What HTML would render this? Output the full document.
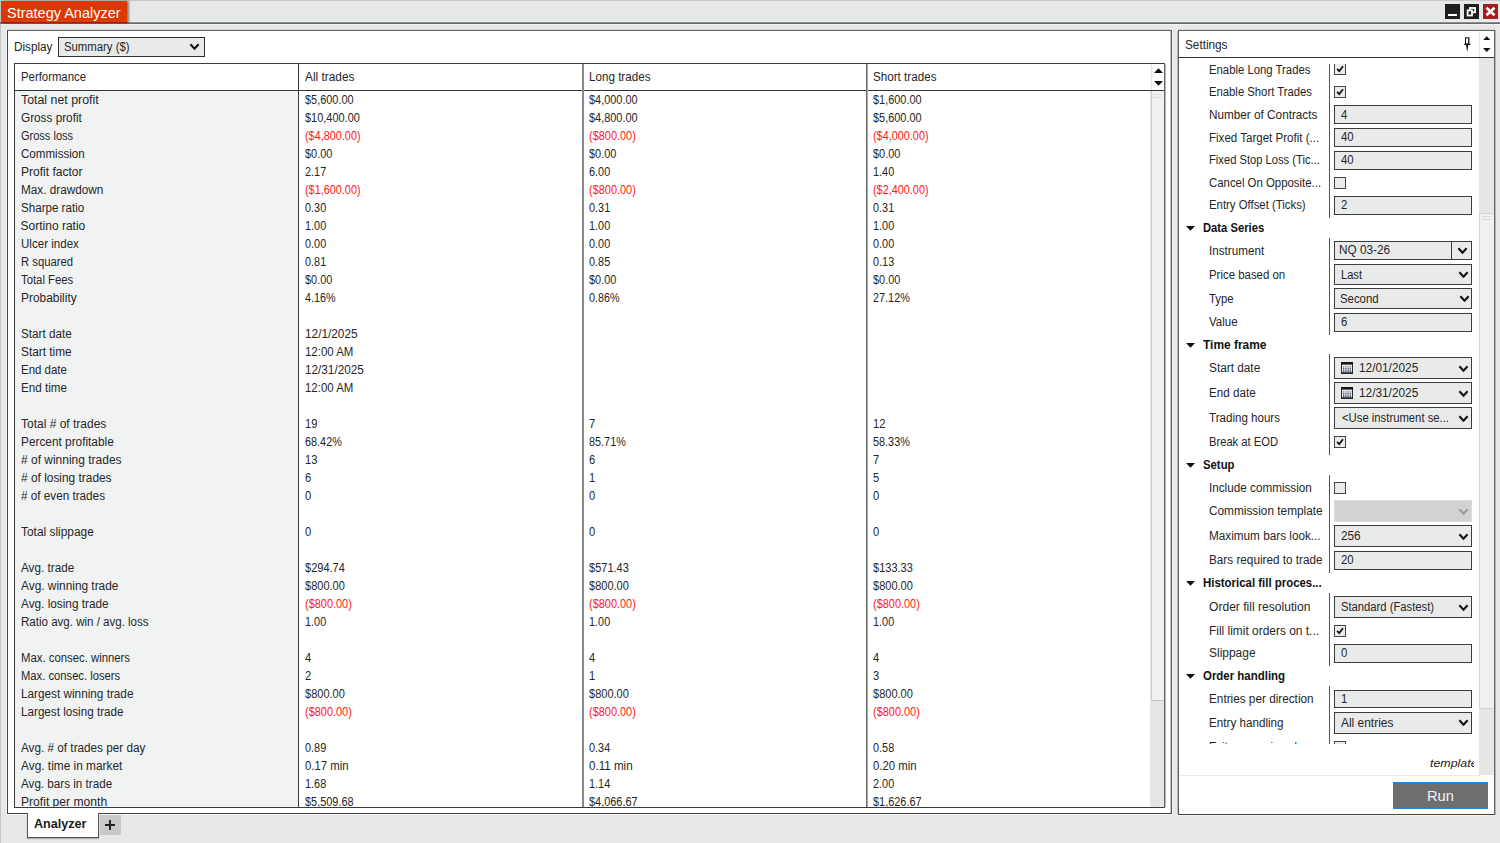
<!DOCTYPE html>
<html><head><meta charset="utf-8"><title>Strategy Analyzer</title>
<style>
html,body{margin:0;padding:0;}
body{width:1500px;height:843px;overflow:hidden;background:#e7e8ea;font-family:"Liberation Sans",sans-serif;}
#w{position:relative;width:1500px;height:843px;overflow:hidden;background:#e7e8ea;}
#w div,#w span,#w svg{position:absolute;box-sizing:border-box;}
.t{white-space:pre;line-height:1;transform-origin:0 0;}
.in{background:#e9eaea;border:1px solid #3c3c3c;}
.cb{background:#eaebeb;border:1px solid #444;width:12px;height:12px;}
.vs{background:#555;width:1px;}
</style></head><body><div id="w">
<div style="left:0;top:0;width:1500px;height:1px;background:#c9c9c9"></div>
<div style="left:0;top:0;width:1px;height:843px;background:#c4c4c4"></div>
<div style="left:1px;top:21px;width:1499px;height:1px;background:#eff0f1"></div>
<div style="left:0;top:22px;width:1500px;height:1px;background:#8a8c8c"></div>
<div style="left:0;top:23px;width:1500px;height:1px;background:#666a69"></div>
<div style="left:1px;top:24px;width:1499px;height:1px;background:#f4f4f5"></div>
<div style="left:1px;top:1px;width:126px;height:22px;background:linear-gradient(#dd3700 0,#dd3700 19px,#e63b00 19.5px,#e63b00 20.5px,#9e2200 21px);box-shadow:2px 0 2px rgba(0,0,0,.45)"></div>
<div style="left:1445px;top:4px;width:15px;height:15px;background:#1f1f1f"></div>
<div style="left:1448px;top:14px;width:9px;height:2px;background:#fff"></div>
<div style="left:1464px;top:4px;width:15px;height:15px;background:#1f1f1f"></div>
<svg style="left:1464px;top:4px" width="15" height="15" viewBox="0 0 15 15"><rect x="5.9" y="4" width="5.2" height="4.3" fill="none" stroke="#fff" stroke-width="1.8"/><rect x="3.6" y="6.4" width="4.4" height="5.1" fill="#1f1f1f" stroke="#fff" stroke-width="1.8"/></svg>
<div style="left:1483px;top:4px;width:15px;height:15px;background:#a51c1c"></div>
<svg style="left:1483px;top:4px" width="15" height="15" viewBox="0 0 15 15"><path d="M3.5 3.8 L11.5 11.2 M11.5 3.8 L3.5 11.2" stroke="#fff" stroke-width="2.6" fill="none"/></svg>
<div style="left:7px;top:29px;width:1165px;height:1px;background:#a4a4a4"></div>
<div style="left:7px;top:30px;width:1165px;height:784px;background:#fff;border:1px solid #444;border-top-color:#666;border-right-color:#5c5c5c;box-shadow:0 0 0 1px rgba(255,255,255,.55)"></div>
<div style="left:1170px;top:31px;width:1px;height:782px;background:#c4c4c4"></div>
<div class="in" style="left:58px;top:37px;width:147px;height:20px;border-color:#2e2e2e"></div>
<svg style="left:189px;top:43px" width="11" height="8" viewBox="0 0 11 8"><path d="M1.4 1.2 L5.5 5.6 L9.6 1.2" stroke="#111" stroke-width="2.1" fill="none"/></svg>
<div style="left:14px;top:63px;width:1151px;height:745px;background:#fff;border:1px solid #3a3a3a;border-right-color:#666"></div>
<div style="left:1165px;top:64px;width:1px;height:743px;background:#b4b4b4"></div>
<div style="left:15px;top:91px;width:283px;height:716px;background:#f1f3f3"></div>
<div style="left:15px;top:90px;width:1149px;height:1px;background:#333"></div>
<div style="left:298px;top:64px;width:1px;height:743px;background:#3a3a3a"></div>
<div style="left:582px;top:64px;width:2px;height:743px;background:#8a8a8a"></div>
<div style="left:866px;top:64px;width:1px;height:743px;background:#6c6c6c"></div>
<div style="left:867px;top:64px;width:1px;height:743px;background:#a8a8a8"></div>
<div style="left:1151px;top:64px;width:1px;height:26px;background:#e4e4e4"></div>
<div style="left:1150px;top:91px;width:14px;height:716px;background:#e5e5e5"></div>
<div style="left:1151px;top:91px;width:13px;height:610px;background:#f1f1f1;border-left:1px solid #cfcfcf;border-bottom:1px solid #c4c4c4"></div>
<div style="left:1153px;top:94px;width:9px;height:1px;background:#dcdcdc"></div>
<div style="left:1153px;top:97px;width:9px;height:1px;background:#dcdcdc"></div>
<svg style="left:1153.5px;top:68px" width="9" height="5" viewBox="0 0 9 5"><path d="M0 5 L4.5 0.2 L9 5 Z" fill="#111"/></svg>
<svg style="left:1153.5px;top:81px" width="9" height="5" viewBox="0 0 9 5"><path d="M0 0 L4.5 4.8 L9 0 Z" fill="#111"/></svg>
<div style="left:27px;top:813px;width:72px;height:25px;background:#fff;border:1px solid #555;border-top:none;box-shadow:0 1px 1px rgba(0,0,0,.25)"></div>
<div style="left:100px;top:815px;width:21px;height:20px;background:#c9c9c9"></div>
<div style="left:105px;top:823.5px;width:10px;height:2px;background:#222"></div>
<div style="left:109px;top:819.5px;width:2px;height:10px;background:#222"></div>
<div style="left:1178px;top:29px;width:317px;height:1px;background:#a4a4a4"></div>
<div style="left:1178px;top:30px;width:317px;height:785px;background:#fff;border:1px solid #444;border-top-color:#666;border-left-color:#5a5a5a;border-right-color:#666;box-shadow:0 0 0 1px rgba(255,255,255,.55)"></div>
<div style="left:1179px;top:57px;width:315px;height:1px;background:#333"></div>
<div style="left:1479px;top:31px;width:1px;height:26px;background:#e6e6e6"></div>
<svg style="left:1483.2px;top:36px" width="7.6" height="4.2" viewBox="0 0 9 5"><path d="M0 5 L4.5 0.2 L9 5 Z" fill="#111"/></svg>
<svg style="left:1483.2px;top:48px" width="7.6" height="4.2" viewBox="0 0 9 5"><path d="M0 0 L4.5 4.8 L9 0 Z" fill="#111"/></svg>
<div style="left:1495px;top:30px;width:1px;height:785px;background:#b4b4b4"></div>
<div style="left:1177px;top:31px;width:1px;height:783px;background:#b8b8b8"></div>
<svg style="left:1462px;top:36px" width="11" height="17" viewBox="0 0 11 17"><rect x="3.5" y="1.8" width="3.4" height="6.2" fill="#fff" stroke="#111" stroke-width="1"/><rect x="6" y="2.2" width="0.7" height="5.6" fill="#111"/><rect x="1.9" y="7.7" width="6.6" height="1.1" fill="#111"/><path d="M4 8.8 L6.4 8.8 L5.3 15.6 L5.1 15.6 Z" fill="#111"/></svg>
<div style="left:1479px;top:58px;width:15px;height:717px;background:#e6e6e6"></div>
<div style="left:1479px;top:213px;width:15px;height:496px;background:#f0f0f0;border-left:1px solid #d2d2d2;border-top:1px solid #d2d2d2;border-bottom:1px solid #d2d2d2"></div>
<div style="left:1482px;top:216px;width:9px;height:1px;background:#dadada"></div>
<div style="left:1482px;top:219px;width:9px;height:1px;background:#dadada"></div>
<div style="left:1180px;top:775px;width:300px;height:1px;background:#ebebeb"></div>
<div class="vs" style="left:1329px;top:64px;height:154px"></div>
<div class="vs" style="left:1329px;top:238px;height:97px"></div>
<div class="vs" style="left:1329px;top:354px;height:100.5px"></div>
<div class="vs" style="left:1329px;top:475px;height:97.5px"></div>
<div class="vs" style="left:1329px;top:593px;height:73px"></div>
<div class="vs" style="left:1329px;top:686px;height:58px"></div>
<div class="cb" style="left:1334px;top:63px;clip-path:inset(1px 0 0 0);"></div>
<svg style="left:1334px;top:63px" width="12" height="12" viewBox="0 0 12 12"><path d="M3.1 5.9 L5.2 8.1 L9 3.3" stroke="#111" stroke-width="1.7" fill="none"/></svg>
<div class="cb" style="left:1334px;top:86px;"></div>
<svg style="left:1334px;top:86px" width="12" height="12" viewBox="0 0 12 12"><path d="M3.1 5.9 L5.2 8.1 L9 3.3" stroke="#111" stroke-width="1.7" fill="none"/></svg>
<div class="in" style="left:1334px;top:105px;width:138px;height:19px"></div>
<div class="in" style="left:1334px;top:127.5px;width:138px;height:19px"></div>
<div class="in" style="left:1334px;top:150.5px;width:138px;height:19px"></div>
<div class="cb" style="left:1334px;top:177px;"></div>
<div class="in" style="left:1334px;top:195.5px;width:138px;height:19px"></div>
<svg style="left:1185.5px;top:226.0px" width="9" height="5" viewBox="0 0 9 5"><path d="M0 0 L4.5 4.8 L9 0 Z" fill="#111"/></svg>
<div class="in" style="left:1334px;top:241px;width:138px;height:19px"></div>
<div style="left:1451px;top:241px;width:1px;height:19px;background:#3c3c3c"></div>
<svg style="left:1456.5px;top:247.0px" width="11" height="8" viewBox="0 0 11 8"><path d="M1.4 1.2 L5.5 5.6 L9.6 1.2" stroke="#111" stroke-width="2.1" fill="none"/></svg>
<div class="in" style="left:1334px;top:264px;width:138px;height:21px"></div>
<svg style="left:1457.5px;top:271.0px" width="11" height="8" viewBox="0 0 11 8"><path d="M1.4 1.2 L5.5 5.6 L9.6 1.2" stroke="#111" stroke-width="2.1" fill="none"/></svg>
<div class="in" style="left:1334px;top:288px;width:138px;height:20.5px"></div>
<svg style="left:1459px;top:294.75px" width="11" height="8" viewBox="0 0 11 8"><path d="M1.4 1.2 L5.5 5.6 L9.6 1.2" stroke="#111" stroke-width="2.1" fill="none"/></svg>
<div class="in" style="left:1334px;top:313px;width:138px;height:18.5px"></div>
<svg style="left:1185.5px;top:342.5px" width="9" height="5" viewBox="0 0 9 5"><path d="M0 0 L4.5 4.8 L9 0 Z" fill="#111"/></svg>
<div class="in" style="left:1334px;top:357px;width:138px;height:22px"></div>
<svg style="left:1457.5px;top:364.5px" width="11" height="8" viewBox="0 0 11 8"><path d="M1.4 1.2 L5.5 5.6 L9.6 1.2" stroke="#111" stroke-width="2.1" fill="none"/></svg>
<svg style="left:1341px;top:362.2px" width="12" height="12" viewBox="0 0 12 12"><rect x="0.5" y="0.5" width="11" height="11" fill="#e4e7ee" stroke="#2a2a2a" stroke-width="1"/><rect x="0" y="0" width="12" height="2.6" fill="#151515"/><path d="M2.7 4.6 V10 M4.9 4.6 V10 M7.1 4.6 V10 M9.3 4.6 V10" stroke="#3b4254" stroke-width="1.1"/><path d="M1.5 5.6 H10.5 M1.5 7.8 H10.5" stroke="#e4e7ee" stroke-width="0.7"/><rect x="0.5" y="10.2" width="11" height="1.3" fill="#2a2a2a"/></svg>
<div class="in" style="left:1334px;top:382px;width:138px;height:22px"></div>
<svg style="left:1457.5px;top:389.5px" width="11" height="8" viewBox="0 0 11 8"><path d="M1.4 1.2 L5.5 5.6 L9.6 1.2" stroke="#111" stroke-width="2.1" fill="none"/></svg>
<svg style="left:1341px;top:387.2px" width="12" height="12" viewBox="0 0 12 12"><rect x="0.5" y="0.5" width="11" height="11" fill="#e4e7ee" stroke="#2a2a2a" stroke-width="1"/><rect x="0" y="0" width="12" height="2.6" fill="#151515"/><path d="M2.7 4.6 V10 M4.9 4.6 V10 M7.1 4.6 V10 M9.3 4.6 V10" stroke="#3b4254" stroke-width="1.1"/><path d="M1.5 5.6 H10.5 M1.5 7.8 H10.5" stroke="#e4e7ee" stroke-width="0.7"/><rect x="0.5" y="10.2" width="11" height="1.3" fill="#2a2a2a"/></svg>
<div class="in" style="left:1334px;top:407px;width:138px;height:22px"></div>
<svg style="left:1457.5px;top:414.5px" width="11" height="8" viewBox="0 0 11 8"><path d="M1.4 1.2 L5.5 5.6 L9.6 1.2" stroke="#111" stroke-width="2.1" fill="none"/></svg>
<div class="cb" style="left:1334px;top:436px;"></div>
<svg style="left:1334px;top:436px" width="12" height="12" viewBox="0 0 12 12"><path d="M3.1 5.9 L5.2 8.1 L9 3.3" stroke="#111" stroke-width="1.7" fill="none"/></svg>
<svg style="left:1185.5px;top:463.0px" width="9" height="5" viewBox="0 0 9 5"><path d="M0 0 L4.5 4.8 L9 0 Z" fill="#111"/></svg>
<div class="cb" style="left:1334px;top:481.5px;"></div>
<div style="left:1334px;top:500px;width:138px;height:22px;background:#d2d2d2;border:1px solid #dcdcdc"></div>
<svg style="left:1457.5px;top:507.5px" width="11" height="8" viewBox="0 0 11 8"><path d="M1.4 1.2 L5.5 5.6 L9.6 1.2" stroke="#9b9b9b" stroke-width="2.1" fill="none"/></svg>
<div class="in" style="left:1334px;top:525px;width:138px;height:22px"></div>
<svg style="left:1457.5px;top:532.5px" width="11" height="8" viewBox="0 0 11 8"><path d="M1.4 1.2 L5.5 5.6 L9.6 1.2" stroke="#111" stroke-width="2.1" fill="none"/></svg>
<div class="in" style="left:1334px;top:550.5px;width:138px;height:19px"></div>
<svg style="left:1185.5px;top:581.0px" width="9" height="5" viewBox="0 0 9 5"><path d="M0 0 L4.5 4.8 L9 0 Z" fill="#111"/></svg>
<div class="in" style="left:1334px;top:596px;width:138px;height:22px"></div>
<svg style="left:1457.5px;top:603.5px" width="11" height="8" viewBox="0 0 11 8"><path d="M1.4 1.2 L5.5 5.6 L9.6 1.2" stroke="#111" stroke-width="2.1" fill="none"/></svg>
<div class="cb" style="left:1334px;top:625px;"></div>
<svg style="left:1334px;top:625px" width="12" height="12" viewBox="0 0 12 12"><path d="M3.1 5.9 L5.2 8.1 L9 3.3" stroke="#111" stroke-width="1.7" fill="none"/></svg>
<div class="in" style="left:1334px;top:643.5px;width:138px;height:19px"></div>
<svg style="left:1185.5px;top:674.0px" width="9" height="5" viewBox="0 0 9 5"><path d="M0 0 L4.5 4.8 L9 0 Z" fill="#111"/></svg>
<div class="in" style="left:1334px;top:689.5px;width:138px;height:18.5px"></div>
<div class="in" style="left:1334px;top:712px;width:138px;height:21.5px"></div>
<svg style="left:1457.5px;top:719.25px" width="11" height="8" viewBox="0 0 11 8"><path d="M1.4 1.2 L5.5 5.6 L9.6 1.2" stroke="#111" stroke-width="2.1" fill="none"/></svg>
<div style="left:1179px;top:736px;width:300px;height:8px;overflow:hidden"><span class="t" style="left:29.6px;top:5.0px;font-size:12px;color:#1f1f1f;transform:scaleX(.95)">Exit on session close</span><div class="cb" style="left:155px;top:5px"></div></div>
<div style="left:1420px;top:750px;width:54px;height:24px;overflow:hidden"><span class="t" style="left:9.5px;top:6.7px;font-size:11.7px;font-style:italic;color:#1c1c1c;transform:scaleX(1.06)">template</span></div>
<div style="left:1393px;top:782px;width:95px;height:27px;background:#6e6e6e;border:1px solid #1e84dc"></div>
<span class="t" style="left:7.2px;top:5.7px;font-size:14.8px;transform:scaleX(0.979);color:#fff;">Strategy Analyzer</span>
<span class="t" style="left:13.6px;top:40.7px;font-size:12.0px;transform:scaleX(0.978);color:#262626;">Display</span>
<span class="t" style="left:63.7px;top:40.7px;font-size:12.0px;transform:scaleX(0.945);color:#262626;">Summary ($)</span>
<span class="t" style="left:20.6px;top:71.2px;font-size:12.0px;transform:scaleX(0.946);color:#262626;">Performance</span>
<span class="t" style="left:304.7px;top:71.2px;font-size:12.0px;transform:scaleX(0.989);color:#262626;">All trades</span>
<span class="t" style="left:588.7px;top:71.2px;font-size:12.0px;transform:scaleX(0.970);color:#262626;">Long trades</span>
<span class="t" style="left:872.7px;top:71.2px;font-size:12.0px;transform:scaleX(0.971);color:#262626;">Short trades</span>
<span class="t" style="left:20.6px;top:93.7px;font-size:12.0px;transform:scaleX(1.030);color:#262626;">Total net profit</span>
<span class="t" style="left:305.0px;top:93.7px;font-size:12.0px;transform:scaleX(0.910);color:#262626;">$5,600.00</span>
<span class="t" style="left:589.0px;top:93.7px;font-size:12.0px;transform:scaleX(0.910);color:#262626;">$4,000.00</span>
<span class="t" style="left:873.0px;top:93.7px;font-size:12.0px;transform:scaleX(0.910);color:#262626;">$1,600.00</span>
<span class="t" style="left:20.6px;top:111.7px;font-size:12.0px;transform:scaleX(0.980);color:#262626;">Gross profit</span>
<span class="t" style="left:305.0px;top:111.7px;font-size:12.0px;transform:scaleX(0.913);color:#262626;">$10,400.00</span>
<span class="t" style="left:589.0px;top:111.7px;font-size:12.0px;transform:scaleX(0.910);color:#262626;">$4,800.00</span>
<span class="t" style="left:873.0px;top:111.7px;font-size:12.0px;transform:scaleX(0.910);color:#262626;">$5,600.00</span>
<span class="t" style="left:20.6px;top:129.7px;font-size:12.0px;transform:scaleX(0.918);color:#262626;">Gross loss</span>
<span class="t" style="left:305.0px;top:129.7px;font-size:12.0px;transform:scaleX(0.905);color:#ff1616;">($4,800.00)</span>
<span class="t" style="left:589.0px;top:129.7px;font-size:12.0px;transform:scaleX(0.912);color:#ff1616;">($800.00)</span>
<span class="t" style="left:873.0px;top:129.7px;font-size:12.0px;transform:scaleX(0.905);color:#ff1616;">($4,000.00)</span>
<span class="t" style="left:20.6px;top:147.7px;font-size:12.0px;transform:scaleX(0.965);color:#262626;">Commission</span>
<span class="t" style="left:305.0px;top:147.7px;font-size:12.0px;transform:scaleX(0.913);color:#262626;">$0.00</span>
<span class="t" style="left:589.0px;top:147.7px;font-size:12.0px;transform:scaleX(0.913);color:#262626;">$0.00</span>
<span class="t" style="left:873.0px;top:147.7px;font-size:12.0px;transform:scaleX(0.913);color:#262626;">$0.00</span>
<span class="t" style="left:20.6px;top:165.7px;font-size:12.0px;transform:scaleX(1.002);color:#262626;">Profit factor</span>
<span class="t" style="left:305.0px;top:165.7px;font-size:12.0px;transform:scaleX(0.907);color:#262626;">2.17</span>
<span class="t" style="left:589.0px;top:165.7px;font-size:12.0px;transform:scaleX(0.907);color:#262626;">6.00</span>
<span class="t" style="left:873.0px;top:165.7px;font-size:12.0px;transform:scaleX(0.907);color:#262626;">1.40</span>
<span class="t" style="left:20.6px;top:183.7px;font-size:12.0px;transform:scaleX(0.979);color:#262626;">Max. drawdown</span>
<span class="t" style="left:305.0px;top:183.7px;font-size:12.0px;transform:scaleX(0.905);color:#ff1616;">($1,600.00)</span>
<span class="t" style="left:589.0px;top:183.7px;font-size:12.0px;transform:scaleX(0.912);color:#ff1616;">($800.00)</span>
<span class="t" style="left:873.0px;top:183.7px;font-size:12.0px;transform:scaleX(0.905);color:#ff1616;">($2,400.00)</span>
<span class="t" style="left:20.6px;top:201.7px;font-size:12.0px;transform:scaleX(0.966);color:#262626;">Sharpe ratio</span>
<span class="t" style="left:305.0px;top:201.7px;font-size:12.0px;transform:scaleX(0.907);color:#262626;">0.30</span>
<span class="t" style="left:589.0px;top:201.7px;font-size:12.0px;transform:scaleX(0.907);color:#262626;">0.31</span>
<span class="t" style="left:873.0px;top:201.7px;font-size:12.0px;transform:scaleX(0.907);color:#262626;">0.31</span>
<span class="t" style="left:20.6px;top:219.7px;font-size:12.0px;transform:scaleX(1.000);color:#262626;">Sortino ratio</span>
<span class="t" style="left:305.0px;top:219.7px;font-size:12.0px;transform:scaleX(0.907);color:#262626;">1.00</span>
<span class="t" style="left:589.0px;top:219.7px;font-size:12.0px;transform:scaleX(0.907);color:#262626;">1.00</span>
<span class="t" style="left:873.0px;top:219.7px;font-size:12.0px;transform:scaleX(0.907);color:#262626;">1.00</span>
<span class="t" style="left:20.6px;top:237.7px;font-size:12.0px;transform:scaleX(0.964);color:#262626;">Ulcer index</span>
<span class="t" style="left:305.0px;top:237.7px;font-size:12.0px;transform:scaleX(0.907);color:#262626;">0.00</span>
<span class="t" style="left:589.0px;top:237.7px;font-size:12.0px;transform:scaleX(0.907);color:#262626;">0.00</span>
<span class="t" style="left:873.0px;top:237.7px;font-size:12.0px;transform:scaleX(0.907);color:#262626;">0.00</span>
<span class="t" style="left:20.6px;top:255.7px;font-size:12.0px;transform:scaleX(0.940);color:#262626;">R squared</span>
<span class="t" style="left:305.0px;top:255.7px;font-size:12.0px;transform:scaleX(0.907);color:#262626;">0.81</span>
<span class="t" style="left:589.0px;top:255.7px;font-size:12.0px;transform:scaleX(0.907);color:#262626;">0.85</span>
<span class="t" style="left:873.0px;top:255.7px;font-size:12.0px;transform:scaleX(0.907);color:#262626;">0.13</span>
<span class="t" style="left:20.6px;top:273.7px;font-size:12.0px;transform:scaleX(0.943);color:#262626;">Total Fees</span>
<span class="t" style="left:305.0px;top:273.7px;font-size:12.0px;transform:scaleX(0.913);color:#262626;">$0.00</span>
<span class="t" style="left:589.0px;top:273.7px;font-size:12.0px;transform:scaleX(0.913);color:#262626;">$0.00</span>
<span class="t" style="left:873.0px;top:273.7px;font-size:12.0px;transform:scaleX(0.913);color:#262626;">$0.00</span>
<span class="t" style="left:20.6px;top:291.7px;font-size:12.0px;transform:scaleX(0.994);color:#262626;">Probability</span>
<span class="t" style="left:305.0px;top:291.7px;font-size:12.0px;transform:scaleX(0.900);color:#262626;">4.16%</span>
<span class="t" style="left:589.0px;top:291.7px;font-size:12.0px;transform:scaleX(0.900);color:#262626;">0.86%</span>
<span class="t" style="left:873.0px;top:291.7px;font-size:12.0px;transform:scaleX(0.905);color:#262626;">27.12%</span>
<span class="t" style="left:20.6px;top:327.7px;font-size:12.0px;transform:scaleX(0.974);color:#262626;">Start date</span>
<span class="t" style="left:305.0px;top:327.7px;font-size:12.0px;transform:scaleX(0.985);color:#262626;">12/1/2025</span>
<span class="t" style="left:20.6px;top:345.7px;font-size:12.0px;transform:scaleX(0.987);color:#262626;">Start time</span>
<span class="t" style="left:305.0px;top:345.7px;font-size:12.0px;transform:scaleX(0.954);color:#262626;">12:00 AM</span>
<span class="t" style="left:20.6px;top:363.7px;font-size:12.0px;transform:scaleX(0.955);color:#262626;">End date</span>
<span class="t" style="left:305.0px;top:363.7px;font-size:12.0px;transform:scaleX(0.979);color:#262626;">12/31/2025</span>
<span class="t" style="left:20.6px;top:381.7px;font-size:12.0px;transform:scaleX(0.970);color:#262626;">End time</span>
<span class="t" style="left:305.0px;top:381.7px;font-size:12.0px;transform:scaleX(0.954);color:#262626;">12:00 AM</span>
<span class="t" style="left:20.6px;top:417.7px;font-size:12.0px;transform:scaleX(0.999);color:#262626;">Total # of trades</span>
<span class="t" style="left:305.0px;top:417.7px;font-size:12.0px;transform:scaleX(0.932);color:#262626;">19</span>
<span class="t" style="left:589.0px;top:417.7px;font-size:12.0px;transform:scaleX(0.931);color:#262626;">7</span>
<span class="t" style="left:873.0px;top:417.7px;font-size:12.0px;transform:scaleX(0.932);color:#262626;">12</span>
<span class="t" style="left:20.6px;top:435.7px;font-size:12.0px;transform:scaleX(0.986);color:#262626;">Percent profitable</span>
<span class="t" style="left:305.0px;top:435.7px;font-size:12.0px;transform:scaleX(0.905);color:#262626;">68.42%</span>
<span class="t" style="left:589.0px;top:435.7px;font-size:12.0px;transform:scaleX(0.905);color:#262626;">85.71%</span>
<span class="t" style="left:873.0px;top:435.7px;font-size:12.0px;transform:scaleX(0.905);color:#262626;">58.33%</span>
<span class="t" style="left:20.6px;top:453.7px;font-size:12.0px;transform:scaleX(0.998);color:#262626;"># of winning trades</span>
<span class="t" style="left:305.0px;top:453.7px;font-size:12.0px;transform:scaleX(0.932);color:#262626;">13</span>
<span class="t" style="left:589.0px;top:453.7px;font-size:12.0px;transform:scaleX(0.931);color:#262626;">6</span>
<span class="t" style="left:873.0px;top:453.7px;font-size:12.0px;transform:scaleX(0.931);color:#262626;">7</span>
<span class="t" style="left:20.6px;top:471.7px;font-size:12.0px;transform:scaleX(0.991);color:#262626;"># of losing trades</span>
<span class="t" style="left:305.0px;top:471.7px;font-size:12.0px;transform:scaleX(0.931);color:#262626;">6</span>
<span class="t" style="left:589.0px;top:471.7px;font-size:12.0px;transform:scaleX(0.931);color:#262626;">1</span>
<span class="t" style="left:873.0px;top:471.7px;font-size:12.0px;transform:scaleX(0.931);color:#262626;">5</span>
<span class="t" style="left:20.6px;top:489.7px;font-size:12.0px;transform:scaleX(0.976);color:#262626;"># of even trades</span>
<span class="t" style="left:305.0px;top:489.7px;font-size:12.0px;transform:scaleX(0.931);color:#262626;">0</span>
<span class="t" style="left:589.0px;top:489.7px;font-size:12.0px;transform:scaleX(0.931);color:#262626;">0</span>
<span class="t" style="left:873.0px;top:489.7px;font-size:12.0px;transform:scaleX(0.931);color:#262626;">0</span>
<span class="t" style="left:20.6px;top:525.7px;font-size:12.0px;transform:scaleX(0.992);color:#262626;">Total slippage</span>
<span class="t" style="left:305.0px;top:525.7px;font-size:12.0px;transform:scaleX(0.931);color:#262626;">0</span>
<span class="t" style="left:589.0px;top:525.7px;font-size:12.0px;transform:scaleX(0.931);color:#262626;">0</span>
<span class="t" style="left:873.0px;top:525.7px;font-size:12.0px;transform:scaleX(0.931);color:#262626;">0</span>
<span class="t" style="left:20.6px;top:561.7px;font-size:12.0px;transform:scaleX(0.976);color:#262626;">Avg. trade</span>
<span class="t" style="left:305.0px;top:561.7px;font-size:12.0px;transform:scaleX(0.919);color:#262626;">$294.74</span>
<span class="t" style="left:589.0px;top:561.7px;font-size:12.0px;transform:scaleX(0.919);color:#262626;">$571.43</span>
<span class="t" style="left:873.0px;top:561.7px;font-size:12.0px;transform:scaleX(0.919);color:#262626;">$133.33</span>
<span class="t" style="left:20.6px;top:579.7px;font-size:12.0px;transform:scaleX(0.989);color:#262626;">Avg. winning trade</span>
<span class="t" style="left:305.0px;top:579.7px;font-size:12.0px;transform:scaleX(0.919);color:#262626;">$800.00</span>
<span class="t" style="left:589.0px;top:579.7px;font-size:12.0px;transform:scaleX(0.919);color:#262626;">$800.00</span>
<span class="t" style="left:873.0px;top:579.7px;font-size:12.0px;transform:scaleX(0.919);color:#262626;">$800.00</span>
<span class="t" style="left:20.6px;top:597.7px;font-size:12.0px;transform:scaleX(0.982);color:#262626;">Avg. losing trade</span>
<span class="t" style="left:305.0px;top:597.7px;font-size:12.0px;transform:scaleX(0.912);color:#ff1616;">($800.00)</span>
<span class="t" style="left:589.0px;top:597.7px;font-size:12.0px;transform:scaleX(0.912);color:#ff1616;">($800.00)</span>
<span class="t" style="left:873.0px;top:597.7px;font-size:12.0px;transform:scaleX(0.912);color:#ff1616;">($800.00)</span>
<span class="t" style="left:20.6px;top:615.7px;font-size:12.0px;transform:scaleX(0.961);color:#262626;">Ratio avg. win / avg. loss</span>
<span class="t" style="left:305.0px;top:615.7px;font-size:12.0px;transform:scaleX(0.907);color:#262626;">1.00</span>
<span class="t" style="left:589.0px;top:615.7px;font-size:12.0px;transform:scaleX(0.907);color:#262626;">1.00</span>
<span class="t" style="left:873.0px;top:615.7px;font-size:12.0px;transform:scaleX(0.907);color:#262626;">1.00</span>
<span class="t" style="left:20.6px;top:651.7px;font-size:12.0px;transform:scaleX(0.945);color:#262626;">Max. consec. winners</span>
<span class="t" style="left:305.0px;top:651.7px;font-size:12.0px;transform:scaleX(0.931);color:#262626;">4</span>
<span class="t" style="left:589.0px;top:651.7px;font-size:12.0px;transform:scaleX(0.931);color:#262626;">4</span>
<span class="t" style="left:873.0px;top:651.7px;font-size:12.0px;transform:scaleX(0.931);color:#262626;">4</span>
<span class="t" style="left:20.6px;top:669.7px;font-size:12.0px;transform:scaleX(0.935);color:#262626;">Max. consec. losers</span>
<span class="t" style="left:305.0px;top:669.7px;font-size:12.0px;transform:scaleX(0.931);color:#262626;">2</span>
<span class="t" style="left:589.0px;top:669.7px;font-size:12.0px;transform:scaleX(0.931);color:#262626;">1</span>
<span class="t" style="left:873.0px;top:669.7px;font-size:12.0px;transform:scaleX(0.931);color:#262626;">3</span>
<span class="t" style="left:20.6px;top:687.7px;font-size:12.0px;transform:scaleX(0.980);color:#262626;">Largest winning trade</span>
<span class="t" style="left:305.0px;top:687.7px;font-size:12.0px;transform:scaleX(0.919);color:#262626;">$800.00</span>
<span class="t" style="left:589.0px;top:687.7px;font-size:12.0px;transform:scaleX(0.919);color:#262626;">$800.00</span>
<span class="t" style="left:873.0px;top:687.7px;font-size:12.0px;transform:scaleX(0.919);color:#262626;">$800.00</span>
<span class="t" style="left:20.6px;top:705.7px;font-size:12.0px;transform:scaleX(0.973);color:#262626;">Largest losing trade</span>
<span class="t" style="left:305.0px;top:705.7px;font-size:12.0px;transform:scaleX(0.912);color:#ff1616;">($800.00)</span>
<span class="t" style="left:589.0px;top:705.7px;font-size:12.0px;transform:scaleX(0.912);color:#ff1616;">($800.00)</span>
<span class="t" style="left:873.0px;top:705.7px;font-size:12.0px;transform:scaleX(0.912);color:#ff1616;">($800.00)</span>
<span class="t" style="left:20.6px;top:741.7px;font-size:12.0px;transform:scaleX(0.978);color:#262626;">Avg. # of trades per day</span>
<span class="t" style="left:305.0px;top:741.7px;font-size:12.0px;transform:scaleX(0.907);color:#262626;">0.89</span>
<span class="t" style="left:589.0px;top:741.7px;font-size:12.0px;transform:scaleX(0.907);color:#262626;">0.34</span>
<span class="t" style="left:873.0px;top:741.7px;font-size:12.0px;transform:scaleX(0.907);color:#262626;">0.58</span>
<span class="t" style="left:20.6px;top:759.7px;font-size:12.0px;transform:scaleX(0.989);color:#262626;">Avg. time in market</span>
<span class="t" style="left:305.0px;top:759.7px;font-size:12.0px;transform:scaleX(0.947);color:#262626;">0.17 min</span>
<span class="t" style="left:589.0px;top:759.7px;font-size:12.0px;transform:scaleX(0.966);color:#262626;">0.11 min</span>
<span class="t" style="left:873.0px;top:759.7px;font-size:12.0px;transform:scaleX(0.947);color:#262626;">0.20 min</span>
<span class="t" style="left:20.6px;top:777.7px;font-size:12.0px;transform:scaleX(0.971);color:#262626;">Avg. bars in trade</span>
<span class="t" style="left:305.0px;top:777.7px;font-size:12.0px;transform:scaleX(0.907);color:#262626;">1.68</span>
<span class="t" style="left:589.0px;top:777.7px;font-size:12.0px;transform:scaleX(0.907);color:#262626;">1.14</span>
<span class="t" style="left:873.0px;top:777.7px;font-size:12.0px;transform:scaleX(0.907);color:#262626;">2.00</span>
<span class="t" style="left:20.6px;top:795.7px;font-size:12.0px;transform:scaleX(1.009);color:#262626;clip-path:inset(0 0 1.0px 0);">Profit per month</span>
<span class="t" style="left:305.0px;top:795.7px;font-size:12.0px;transform:scaleX(0.910);color:#262626;clip-path:inset(0 0 1.0px 0);">$5,509.68</span>
<span class="t" style="left:589.0px;top:795.7px;font-size:12.0px;transform:scaleX(0.910);color:#262626;clip-path:inset(0 0 1.0px 0);">$4,066.67</span>
<span class="t" style="left:873.0px;top:795.7px;font-size:12.0px;transform:scaleX(0.910);color:#262626;clip-path:inset(0 0 1.0px 0);">$1,626.67</span>
<span class="t" style="left:33.8px;top:817.9px;font-size:12.7px;transform:scaleX(0.993);color:#1a1a1a;font-weight:bold;">Analyzer</span>
<span class="t" style="left:1184.7px;top:38.7px;font-size:12.0px;transform:scaleX(0.980);color:#262626;">Settings</span>
<span class="t" style="left:1208.6px;top:63.8px;font-size:12.0px;transform:scaleX(0.944);color:#262626;">Enable Long Trades</span>
<span class="t" style="left:1208.6px;top:86.4px;font-size:12.0px;transform:scaleX(0.941);color:#262626;">Enable Short Trades</span>
<span class="t" style="left:1208.6px;top:109.0px;font-size:12.0px;transform:scaleX(0.979);color:#262626;">Number of Contracts</span>
<span class="t" style="left:1340.5px;top:108.8px;font-size:12.0px;transform:scaleX(0.949);color:#262626;">4</span>
<span class="t" style="left:1208.6px;top:131.6px;font-size:12.0px;transform:scaleX(0.962);color:#262626;">Fixed Target Profit (...</span>
<span class="t" style="left:1340.5px;top:131.3px;font-size:12.0px;transform:scaleX(0.951);color:#262626;">40</span>
<span class="t" style="left:1208.6px;top:154.2px;font-size:12.0px;transform:scaleX(0.932);color:#262626;">Fixed Stop Loss (Tic...</span>
<span class="t" style="left:1340.5px;top:154.3px;font-size:12.0px;transform:scaleX(0.951);color:#262626;">40</span>
<span class="t" style="left:1208.6px;top:176.8px;font-size:12.0px;transform:scaleX(0.949);color:#262626;">Cancel On Opposite...</span>
<span class="t" style="left:1208.6px;top:199.4px;font-size:12.0px;transform:scaleX(0.947);color:#262626;">Entry Offset (Ticks)</span>
<span class="t" style="left:1340.5px;top:199.3px;font-size:12.0px;transform:scaleX(0.949);color:#262626;">2</span>
<span class="t" style="left:1203.2px;top:222.2px;font-size:12.0px;transform:scaleX(0.935);color:#111;font-weight:bold;">Data Series</span>
<span class="t" style="left:1208.6px;top:244.9px;font-size:12.0px;transform:scaleX(0.973);color:#262626;">Instrument</span>
<span class="t" style="left:1339.0px;top:244.0px;font-size:12.0px;transform:scaleX(0.980);color:#262626;">NQ 03-26</span>
<span class="t" style="left:1208.6px;top:268.7px;font-size:12.0px;transform:scaleX(0.952);color:#262626;">Price based on</span>
<span class="t" style="left:1340.8px;top:268.8px;font-size:12.0px;transform:scaleX(0.926);color:#262626;">Last</span>
<span class="t" style="left:1208.6px;top:292.7px;font-size:12.0px;transform:scaleX(0.946);color:#262626;">Type</span>
<span class="t" style="left:1339.8px;top:292.6px;font-size:12.0px;transform:scaleX(0.948);color:#262626;">Second</span>
<span class="t" style="left:1208.6px;top:316.0px;font-size:12.0px;transform:scaleX(0.959);color:#262626;">Value</span>
<span class="t" style="left:1340.5px;top:315.5px;font-size:12.0px;transform:scaleX(0.949);color:#262626;">6</span>
<span class="t" style="left:1203.2px;top:338.7px;font-size:12.0px;transform:scaleX(0.995);color:#111;font-weight:bold;">Time frame</span>
<span class="t" style="left:1208.6px;top:362.2px;font-size:12.0px;transform:scaleX(0.984);color:#262626;">Start date</span>
<span class="t" style="left:1359.0px;top:362.3px;font-size:12.0px;transform:scaleX(0.986);color:#262626;">12/01/2025</span>
<span class="t" style="left:1208.6px;top:387.2px;font-size:12.0px;transform:scaleX(0.970);color:#262626;">End date</span>
<span class="t" style="left:1359.0px;top:387.3px;font-size:12.0px;transform:scaleX(0.986);color:#262626;">12/31/2025</span>
<span class="t" style="left:1208.6px;top:412.2px;font-size:12.0px;transform:scaleX(0.965);color:#262626;">Trading hours</span>
<span class="t" style="left:1342.2px;top:412.3px;font-size:12.0px;transform:scaleX(0.941);color:#262626;">&lt;Use instrument se...</span>
<span class="t" style="left:1208.6px;top:436.2px;font-size:12.0px;transform:scaleX(0.932);color:#262626;">Break at EOD</span>
<span class="t" style="left:1203.2px;top:459.2px;font-size:12.0px;transform:scaleX(0.945);color:#111;font-weight:bold;">Setup</span>
<span class="t" style="left:1208.6px;top:481.7px;font-size:12.0px;transform:scaleX(0.976);color:#262626;">Include commission</span>
<span class="t" style="left:1208.6px;top:505.2px;font-size:12.0px;transform:scaleX(0.985);color:#262626;">Commission template</span>
<span class="t" style="left:1208.6px;top:530.2px;font-size:12.0px;transform:scaleX(0.979);color:#262626;">Maximum bars look...</span>
<span class="t" style="left:1340.8px;top:530.3px;font-size:12.0px;transform:scaleX(0.978);color:#262626;">256</span>
<span class="t" style="left:1208.6px;top:554.2px;font-size:12.0px;transform:scaleX(0.979);color:#262626;">Bars required to trade</span>
<span class="t" style="left:1340.5px;top:554.3px;font-size:12.0px;transform:scaleX(0.951);color:#262626;">20</span>
<span class="t" style="left:1203.2px;top:577.2px;font-size:12.0px;transform:scaleX(0.952);color:#111;font-weight:bold;">Historical fill proces...</span>
<span class="t" style="left:1208.6px;top:601.2px;font-size:12.0px;transform:scaleX(1.007);color:#262626;">Order fill resolution</span>
<span class="t" style="left:1340.8px;top:601.3px;font-size:12.0px;transform:scaleX(0.936);color:#262626;">Standard (Fastest)</span>
<span class="t" style="left:1208.6px;top:624.7px;font-size:12.0px;transform:scaleX(0.994);color:#262626;">Fill limit orders on t...</span>
<span class="t" style="left:1208.6px;top:647.2px;font-size:12.0px;transform:scaleX(0.997);color:#262626;">Slippage</span>
<span class="t" style="left:1340.5px;top:647.3px;font-size:12.0px;transform:scaleX(0.949);color:#262626;">0</span>
<span class="t" style="left:1203.2px;top:670.2px;font-size:12.0px;transform:scaleX(0.954);color:#111;font-weight:bold;">Order handling</span>
<span class="t" style="left:1208.6px;top:693.2px;font-size:12.0px;transform:scaleX(0.980);color:#262626;">Entries per direction</span>
<span class="t" style="left:1340.5px;top:693.1px;font-size:12.0px;transform:scaleX(0.949);color:#262626;">1</span>
<span class="t" style="left:1208.6px;top:716.7px;font-size:12.0px;transform:scaleX(0.972);color:#262626;">Entry handling</span>
<span class="t" style="left:1340.8px;top:717.1px;font-size:12.0px;transform:scaleX(0.995);color:#262626;">All entries</span>
<span class="t" style="left:1426.5px;top:788.6px;font-size:14.4px;transform:scaleX(1.015);color:#f4f4f4;">Run</span>
</div></body></html>
